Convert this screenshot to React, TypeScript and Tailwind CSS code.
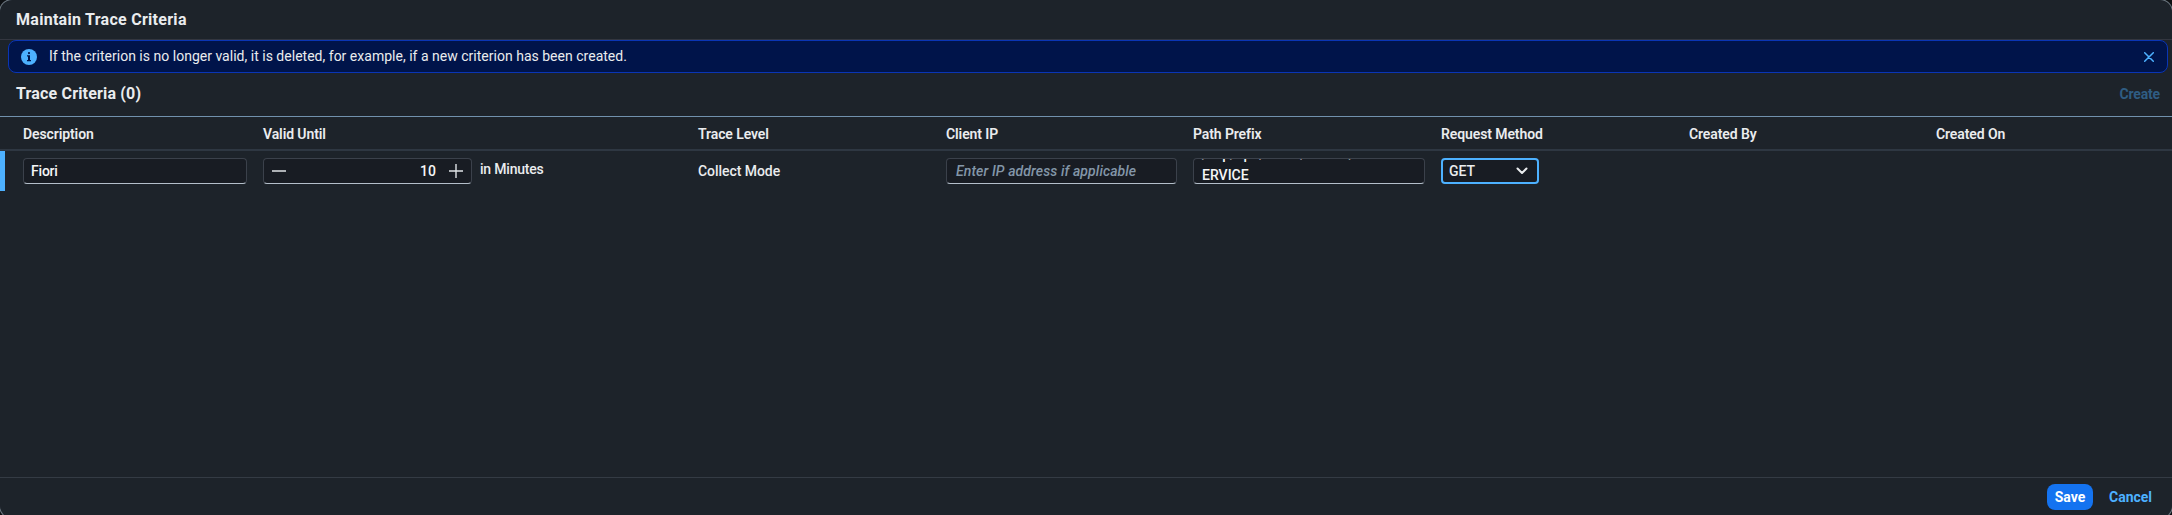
import type { ReactNode } from "react";

const field =
  "h-[26px] rounded-[4px] border border-[#3b414b] border-b-[#b4bfca] bg-[#181c23] text-[14px] text-[#f5f6f7] overflow-hidden";

function Head({ children, className }: { children: ReactNode; className: string }) {
  return (
    <div className={"shrink-0 pt-px text-[14px] font-semibold leading-[32px] tracking-[-0.1px] text-[#eaecee] " + className}>
      {children}
    </div>
  );
}

export default function App() {
  return (
    <div className="h-[515px] w-[2172px] overflow-hidden bg-[#0d1013] font-['Roboto',sans-serif] font-medium">
      <div className="flex h-[518px] w-full flex-col overflow-hidden rounded-[12px] bg-[#1d232a] text-[14px] text-[#eaecee] shadow-[0_0_0_1px_#6c7780]">
        <header className="flex h-[40px] shrink-0 items-center border-b border-[#33363f] pl-[16px]">
          <h1 className="text-[16px] font-bold tracking-[0.28px]">Maintain Trace Criteria</h1>
        </header>
        <div className="mr-[4px] ml-[8px] flex h-[33px] shrink-0 items-center rounded-[8px] border border-[#0a35b5] bg-[#00144a] pr-[13px] pl-[12px] font-normal">
          <svg width="16" height="16" viewBox="0 0 16 16" className="mr-[12px]">
            <circle cx="8" cy="8" r="8" fill="#4db1ff" />
            <path d="M8 3a1.100 1.100 0 1 1 0 2.200a1.100 1.100 0 1 1 0-2.200M6 6.300h3V11h1v1.300H6V11h1V7.500H6z" fill="#00144a" />
          </svg>
          <span className="grow tracking-[0.012px]">
            If the criterion is no longer valid, it is deleted, for example, if a new criterion has been created.
          </span>
          <svg width="10" height="10" viewBox="0 0 10 10" stroke="#4db1ff" strokeWidth="1.5" strokeLinecap="round">
            <path d="M.7.7l8.6 8.6M9.300.7L.7 9.300" />
          </svg>
        </div>
        <div className="flex h-[43px] shrink-0 items-center justify-between pr-[12px] pb-[2px] pl-[16px]">
          <h2 className="text-[16px] font-bold tracking-[0.17px]">Trace Criteria (0)</h2>
          <button className="pt-px font-bold tracking-[-0.15px] text-[#2f5d83]">Create</button>
        </div>
        <div className="flex h-[35px] shrink-0 overflow-hidden border-t border-b-2 border-t-[#7191ad] border-b-[#2e3742] pl-[23px]">
          <Head className="w-[240px]">Description</Head>
          <Head className="w-[435px]">Valid Until</Head>
          <Head className="w-[248px]">Trace Level</Head>
          <Head className="w-[247px]">Client IP</Head>
          <Head className="w-[248px]">Path Prefix</Head>
          <Head className="w-[248px]">Request Method</Head>
          <Head className="w-[247px]">Created By</Head>
          <Head className="w-[200px]">Created On</Head>
        </div>
        <div className="flex h-[40px] shrink-0 items-start border-l-[5px] border-[#4db1ff] pt-[7px] pl-[18px]">
          <div className="w-[240px]">
            <div className={"flex w-[224px] items-center pl-[7px] tracking-[-0.2px] " + field}>Fiori</div>
          </div>
          <div className="flex w-[435px]">
            <div className={"flex w-[209px] items-center pr-[8px] pl-[8px] " + field}>
              <svg width="14" height="14" viewBox="0 0 14 14" stroke="#dfe3e7" strokeWidth="1.4">
                <path d="M0 7h14" />
              </svg>
              <span className="grow pr-[13px] text-right">10</span>
              <svg width="14" height="14" viewBox="0 0 14 14" stroke="#dfe3e7" strokeWidth="1.4">
                <path d="M0 7h14M7 0v14" />
              </svg>
            </div>
            <span className="pl-[8px] leading-[23px] tracking-[-0.2px]">in Minutes</span>
          </div>
          <div className="w-[248px] leading-[26px] tracking-[-0.05px]">Collect Mode</div>
          <div className="w-[247px]">
            <div className={"flex w-[231px] items-center pl-[9px] " + field}>
              <span className="italic tracking-[0.1px] text-[#8396a8]">Enter IP address if applicable</span>
            </div>
          </div>
          <div className="w-[248px]">
            <div className={"flex w-[232px] flex-col justify-end pl-[8px] " + field}>
              <div className="mb-[-3px] shrink-0 leading-[21px]">
                /sap/opu/odata/IWFND/CATALOGS
                <br />
                ERVICE
              </div>
            </div>
          </div>
          <div className="flex h-[26px] w-[98px] items-center justify-between rounded-[4px] border-2 border-[#4db1ff] bg-[#181c23] pr-[9px] pl-[6px]">
            <span>GET</span>
            <svg width="12" height="8" viewBox="0 0 12 8" fill="none" stroke="#eaecee" strokeWidth="2" strokeLinecap="round" strokeLinejoin="round">
              <path d="M1.500 1.500l4.500 4.500l4.500-4.500" />
            </svg>
          </div>
        </div>
        <div className="grow" />
        <footer className="flex h-[41px] shrink-0 items-start justify-end border-t border-[#343b44] pt-[6px] pr-[20px] font-bold">
          <button className="h-[26px] w-[46px] rounded-[8px] bg-[#1473f0] text-white">Save</button>
          <button className="ml-[16px] h-[26px] w-[43px] text-[#4db1ff]">Cancel</button>
        </footer>
      </div>
    </div>
  );
}
